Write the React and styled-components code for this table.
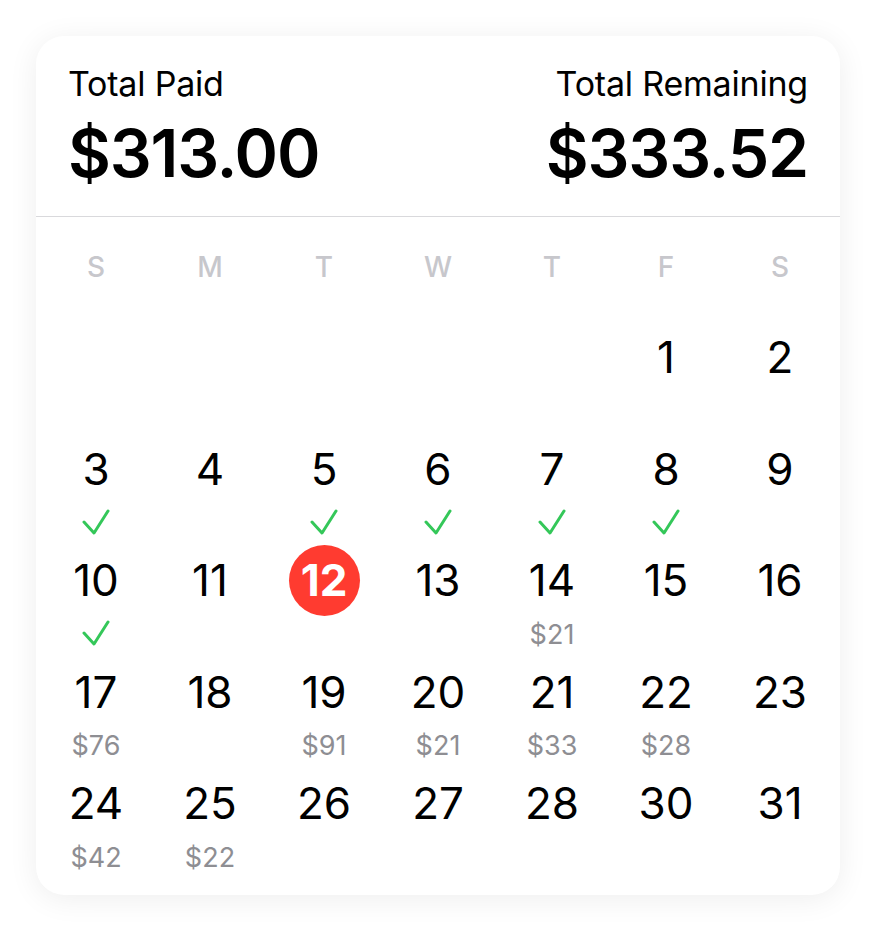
import React from 'react';
import styled, {createGlobalStyle} from 'styled-components';

const GlobalStyle = createGlobalStyle`
	html, body {
		margin: 0;
		padding: 0;
		background: #ffffff;
		font-family: Inter, "Noto Sans", "Liberation Sans", sans-serif;
		-webkit-font-smoothing: antialiased;
	}
`

const WEEKDAYS = ['S', 'M', 'T', 'W', 'T', 'F', 'S'];

// null = empty cell, paid = green tick, due = amount still to pay
const WEEKS = [
	[null, null, null, null, null, {d: 1}, {d: 2}],
	[{d: 3, paid: true}, {d: 4}, {d: 5, paid: true}, {d: 6, paid: true}, {d: 7, paid: true}, {d: 8, paid: true}, {d: 9}],
	[{d: 10, paid: true}, {d: 11}, {d: 12, today: true}, {d: 13}, {d: 14, due: 21}, {d: 15}, {d: 16}],
	[{d: 17, due: 76}, {d: 18}, {d: 19, due: 91}, {d: 20, due: 21}, {d: 21, due: 33}, {d: 22, due: 28}, {d: 23}],
	[{d: 24, due: 42}, {d: 25, due: 22}, {d: 26}, {d: 27}, {d: 28}, {d: 30}, {d: 31}],
];

const Check = () => (
	<svg width="28" height="28" viewBox="0 0 28 28" fill="none">
		<polyline points="2,13 12,24 26,2" stroke="#34c759" strokeWidth="3" strokeLinecap="round" strokeLinejoin="round" />
	</svg>
);

const App = () => {
	return (
		<Page>
			<GlobalStyle />
			<Card>
				<Header>
					<Total>
						<Label>Total Paid</Label>
						<Amount>$313.00</Amount>
					</Total>
					<Total $right>
						<Label>Total Remaining</Label>
						<Amount>$333.52</Amount>
					</Total>
				</Header>

				<Calendar>
					<WeekdayRow>
						{WEEKDAYS.map((w, i) => <Weekday key={i}>{w}</Weekday>)}
					</WeekdayRow>

					{WEEKS.map((week, wi) => (
						<WeekRow key={wi}>
							{week.map((day, di) => (
								<DayCell key={di}>
									{day && (
										<>
											<DayNumber>
												{day.today ? <TodayBadge>{day.d}</TodayBadge> : day.d}
											</DayNumber>
											<DaySub>
												{day.paid && <Check />}
												{day.due && <Due>${day.due}</Due>}
											</DaySub>
										</>
									)}
								</DayCell>
							))}
						</WeekRow>
					))}
				</Calendar>
			</Card>
		</Page>
	);
};

const Page = styled.div`
	padding: 36px;
	width: 804px;
`

const Card = styled.div`
	background: #fff;
	border-radius: 28px;
	box-shadow: 0 4px 30px rgba(0, 0, 0, 0.07);
	overflow: hidden;
`

const Header = styled.div`
	display: flex;
	justify-content: space-between;
	padding: 28px 32px 0 32px;
	height: 152px;
	border-bottom: 1.5px solid #d9d9dc;
`

const Total = styled.div`
	display: flex;
	flex-direction: column;
	align-items: ${p => p.$right ? 'flex-end' : 'flex-start'};
`

const Label = styled.div`
	font-size: 34px;
	line-height: 40px;
	color: #000;
	letter-spacing: -0.2px;
`

const Amount = styled.div`
	margin-top: 13px;
	font-size: 66px;
	line-height: 72px;
	font-weight: 600;
	color: #000;
	letter-spacing: -1.2px;
`

const Calendar = styled.div`
	padding: 0 3px 8px 3px;
`

const WeekdayRow = styled.div`
	display: grid;
	grid-template-columns: repeat(7, 1fr);
	padding-top: 20px;
	margin-bottom: 32px;
`

const Weekday = styled.div`
	height: 60px;
	line-height: 60px;
	text-align: center;
	font-size: 28px;
	font-weight: 500;
	color: #c7c7cc;
`

const WeekRow = styled.div`
	display: grid;
	grid-template-columns: repeat(7, 1fr);
	height: 108px;
	margin-bottom: 3.5px;
`

const DayCell = styled.div`
	display: flex;
	flex-direction: column;
	align-items: center;
`

const DayNumber = styled.div`
	height: 56px;
	display: flex;
	align-items: center;
	justify-content: center;
	font-size: 44px;
	color: #000;
`

const TodayBadge = styled.div`
	width: 71px;
	height: 71px;
	border-radius: 50%;
	background: #ff3b30;
	color: #fff;
	font-weight: 700;
	display: flex;
	align-items: center;
	justify-content: center;
	flex-shrink: 0;
`

const DaySub = styled.div`
	height: 52px;
	display: flex;
	align-items: center;
	justify-content: center;
`

const Due = styled.span`
	font-size: 27px;
	color: #8e8e93;
`

export default App;
